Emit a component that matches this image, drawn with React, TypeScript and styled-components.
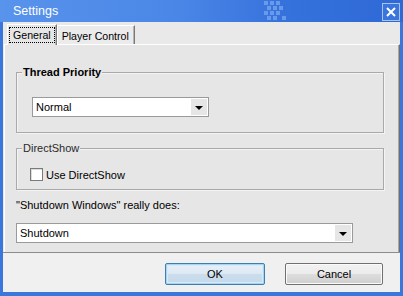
import styled, { createGlobalStyle } from "styled-components";

const GlobalStyle = createGlobalStyle`
  html, body {
    margin: 0;
    padding: 0;
    background: #ffffff;
  }
  * {
    box-sizing: border-box;
  }
`;

const Window = styled.div`
  width: 403px;
  height: 296px;
  display: flex;
  flex-direction: column;
  background: #3a77dc;
  padding: 0 3px 4px 3px;
  font-family: "Liberation Sans", Arial, sans-serif;
  font-size: 11px;
  color: #000;
  overflow: hidden;
`;

const TitleBar = styled.div`
  height: 22px;
  margin: 0 -3px;
  display: flex;
  align-items: center;
  padding: 0 3px 0 13px;
  background: linear-gradient(90deg, #5893ec 0%, #4a86e6 45%, #3672dc 70%, #2e69d6 100%);
  position: relative;
`;

const Title = styled.span`
  color: #ffffff;
  font-size: 12.5px;
  flex: 1;
`;

const Pattern = styled.svg`
  position: absolute;
  left: 264px;
  top: 0;
`;

const CloseButton = styled.div`
  width: 18px;
  height: 18px;
  margin-top: 1px;
  border: 1px solid #a9c2ee;
  display: flex;
  align-items: center;
  justify-content: center;
  background: #3a75dc;
`;

const Body = styled.div`
  flex: 1;
  display: flex;
  flex-direction: column;
  background: #f0f0f0;
`;

const TabArea = styled.div`
  display: flex;
  flex-direction: column;
  background: #e9e9e9;
  padding: 1px 0 0 1px;
  height: 231px;
  border-bottom: 1px solid #8c8c8c;
`;

const TabStrip = styled.div`
  display: flex;
  align-items: flex-end;
  height: 21px;
  padding-left: 3px;
  position: relative;
  z-index: 1;
`;

const Tab = styled.div<{ $active?: boolean }>`
  height: ${(p) => (p.$active ? "21px" : "19px")};
  margin-bottom: ${(p) => (p.$active ? "-1px" : "0")};
  padding: ${(p) => (p.$active ? "1px" : "2px 5px 0 4px")};
  background: ${(p) => (p.$active ? "#e6e6e6" : "#ebebeb")};
  border-top: 1px solid #ffffff;
  border-left: 1px solid #ffffff;
  border-right: 1px solid #7a7a7a;
  box-shadow: inset -1px 0 0 #b5b5b5;
  display: flex;
  align-items: center;
  white-space: nowrap;
  font-size: 10.6px;
`;

const FocusLabel = styled.span`
  border: 1px dotted #000;
  height: 16px;
  padding: 0 3px 0 3px;
  display: flex;
  align-items: center;
`;

const Panel = styled.div`
  flex: 1;
  background: #e6e6e6;
  border-top: 1px solid #ffffff;
  border-left: 1px solid #ffffff;
  border-right: 1px solid #6e6e6e;
  box-shadow: inset -1px 0 0 #a8a8a8;
  padding: 27px 15px 0 11px;
  display: flex;
  flex-direction: column;
`;

const GroupBox = styled.div<{ $height: number }>`
  position: relative;
  height: ${(p) => p.$height}px;
  border: 1px solid #a9a9a9;
  box-shadow: inset 1px 1px 0 #f4f4f4, 1px 1px 0 #f4f4f4;
  display: flex;
  align-items: flex-start;
`;

const Legend = styled.span<{ $bold?: boolean }>`
  position: absolute;
  left: 5px;
  top: -8px;
  padding: 0 1px;
  background: #e6e6e6;
  font-weight: ${(p) => (p.$bold ? 700 : 400)};
  line-height: 14px;
  color: ${(p) => (p.$bold ? "#000" : "#2a2a2a")};
`;

const GroupContent = styled.div`
  margin: 24px 0 0 15px;
`;

const Combo = styled.div<{ $width: number }>`
  width: ${(p) => p.$width}px;
  height: 20px;
  border: 1px solid #9a9a9a;
  background: #ffffff;
  display: flex;
  align-items: stretch;
  padding: 1px;
`;

const ComboText = styled.span`
  flex: 1;
  display: flex;
  align-items: center;
  padding-left: 2px;
`;

const ComboButton = styled.span`
  width: 16px;
  background: #e6e6e6;
  display: flex;
  align-items: center;
  justify-content: center;
`;

const Arrow = styled.span`
  width: 0;
  height: 0;
  border-left: 4px solid transparent;
  border-right: 4px solid transparent;
  border-top: 4px solid #000;
  margin-top: 1px;
`;

const CheckRow = styled.label`
  display: flex;
  align-items: center;
  gap: 3px;
  margin: 19px 0 0 13px;
`;

const CheckBox = styled.span`
  width: 13px;
  height: 13px;
  border: 1px solid #7a7a7a;
  background: #ffffff;
  box-shadow: inset 1px 1px 0 #dcdcdc;
`;

const GroupGap = styled.div`
  height: 15px;
`;

const FieldLabel = styled.div`
  margin-top: 9px;
  margin-bottom: 11px;
  line-height: 13px;
`;

const ButtonBar = styled.div`
  flex: 1;
  display: flex;
  justify-content: flex-end;
  align-items: flex-start;
  gap: 20px;
  padding: 10px 17px 0 0;
`;

const DialogButton = styled.div<{ $default?: boolean; $width: number }>`
  width: ${(p) => p.$width}px;
  height: 22px;
  display: flex;
  align-items: center;
  justify-content: center;
  border: 1px solid ${(p) => (p.$default ? "#3c7fb1" : "#707070")};
  border-radius: 2px;
  background: ${(p) =>
    p.$default
      ? "linear-gradient(#e9f1f8 0%, #dbe8f3 50%, #cbdded 51%, #c6d9ea 100%)"
      : "linear-gradient(#f2f2f2 0%, #ebebeb 50%, #dddddd 51%, #cfcfcf 100%)"};
  box-shadow: ${(p) =>
    p.$default ? "inset 0 0 0 1px #a9d3f0, inset 0 0 0 2px #d6ebfa" : "inset 0 0 0 1px #fbfbfb"};
`;

const dots = [
  [0, 0], [6, 0], [12, 0], [3, 5], [9, 5], [15, 5], [0, 10], [6, 10], [12, 10], [3, 15], [9, 15], [18, 15],
];

export default function App() {
  return (
    <>
      <GlobalStyle />
      <Window>
        <TitleBar>
          <Title>Settings</Title>
          <Pattern width="30" height="22" viewBox="0 0 30 22">
            {dots.map(([x, y], i) => (
              <rect key={i} x={x} y={y + 1} width="4" height="4" fill="#7eaaf0" opacity={0.7} />
            ))}
          </Pattern>
          <CloseButton>
            <svg width="12" height="12" viewBox="0 0 12 12">
              <path d="M2 2 L10 10 M10 2 L2 10" stroke="#ffffff" strokeWidth="2" />
            </svg>
          </CloseButton>
        </TitleBar>
        <Body>
          <TabArea>
            <TabStrip>
              <Tab $active>
                <FocusLabel>General</FocusLabel>
              </Tab>
              <Tab>Player Control</Tab>
            </TabStrip>
            <Panel>
              <GroupBox $height={61}>
                <Legend $bold>Thread Priority</Legend>
                <GroupContent>
                  <Combo $width={177}>
                    <ComboText>Normal</ComboText>
                    <ComboButton>
                      <Arrow />
                    </ComboButton>
                  </Combo>
                </GroupContent>
              </GroupBox>
              <GroupGap />
              <GroupBox $height={42}>
                <Legend>DirectShow</Legend>
                <CheckRow>
                  <CheckBox />
                  Use DirectShow
                </CheckRow>
              </GroupBox>
              <FieldLabel>"Shutdown Windows" really does:</FieldLabel>
              <Combo $width={337}>
                <ComboText>Shutdown</ComboText>
                <ComboButton>
                  <Arrow />
                </ComboButton>
              </Combo>
            </Panel>
          </TabArea>
          <ButtonBar>
            <DialogButton $default $width={100}>OK</DialogButton>
            <DialogButton $width={98}>Cancel</DialogButton>
          </ButtonBar>
        </Body>
      </Window>
    </>
  );
}
